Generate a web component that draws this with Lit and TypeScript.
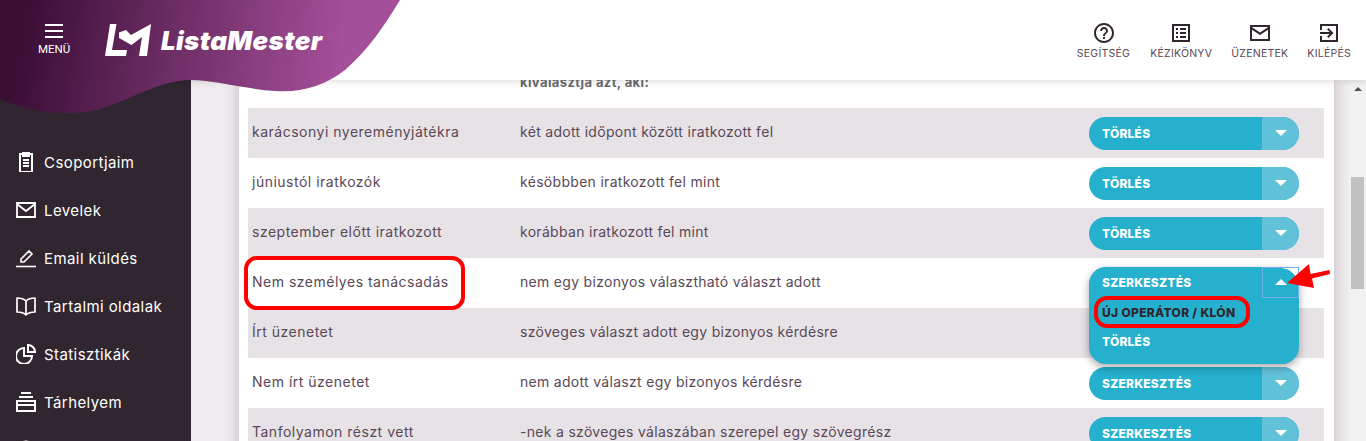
import { LitElement, html, css, svg } from "lit";
import { customElement } from "lit/decorators.js";

const nav = [
  { label: "Csoportjaim", icon: svg`<path fill="#fff" fill-rule="evenodd" d="M3 2h3V0h8v2h3v20H3V2zm2 2v16h10V4h-1v2H6V4H5zm2 4h6v2H7V8zm0 3h6v2H7v-2zm0 3h6v2H7v-2z" transform="translate(0,-1)"/>` },
  { label: "Levelek", icon: svg`<path fill="none" stroke="#fff" stroke-width="1.8" d="M1 3h18v14H1zM1 4l9 7 9-7"/><path stroke="#fff" stroke-width="2" d="M0 17h20"/>` },
  { label: "Email küldés", icon: svg`<path fill="none" stroke="#fff" stroke-width="1.6" d="M5 14v-3l8-8 3 3-8 8H5z"/><path stroke="#fff" stroke-width="1.6" d="M0 18.500h20"/>` },
  { label: "Tartalmi oldalak", icon: svg`<path fill="none" stroke="#fff" stroke-width="1.7" stroke-linejoin="round" d="M10 5C8 3 4 2 1 2v14c3 0 7 1 9 3 2-2 6-3 9-3V2c-3 0-7 1-9 3zm0 0v14"/>` },
  { label: "Statisztikák", icon: svg`<path fill="none" stroke="#fff" stroke-width="2" d="M8 4a8 8 0 1 0 8 8H8V4z"/><path fill="none" stroke="#fff" stroke-width="2" d="M12 1a7 7 0 0 1 7 7h-7V1z"/>` },
  { label: "Tárhelyem", icon: svg`<path fill="none" stroke="#fff" stroke-width="2" d="M1 9h18v10H1zM1 13h18"/><path stroke="#fff" stroke-width="2" d="M3 5h14M5 1h10"/>` },
  { label: "", icon: svg`<circle cx="10" cy="10" r="8.500" fill="none" stroke="#fff" stroke-width="2"/>` },
];

const rows: [string, string, string][] = [
  ["karácsonyi nyereményjátékra", "két adott időpont között iratkozott fel", "TÖRLÉS"],
  ["júniustól iratkozók", "késöbbben iratkozott fel mint", "TÖRLÉS"],
  ["szeptember előtt iratkozott", "korábban iratkozott fel mint", "TÖRLÉS"],
  ["Nem személyes tanácsadás", "nem egy bizonyos választható választ adott", "OPEN"],
  ["Írt üzenetet", "szöveges választ adott egy bizonyos kérdésre", ""],
  ["Nem írt üzenetet", "nem adott választ egy bizonyos kérdésre", "SZERKESZTÉS"],
  ["Tanfolyamon részt vett", "-nek a szöveges válaszában szerepel egy szövegrész", "SZERKESZTÉS"],
];

@customElement("app-root")
export class AppRoot extends LitElement {
  static styles = css`
    :host {
      display: grid;
      grid-template-columns: 191px 1fr;
      grid-template-rows: 80px 361px;
      height: 441px;
      overflow: hidden;
      position: relative;
      font-family: "Inter", "Liberation Sans", sans-serif;
      color: #5a4857;
    }
    header {
      grid-column: 1 / 3;
      position: relative;
      z-index: 3;
      background: #fff;
      box-shadow: 0 2px 7px rgba(0, 0, 0, 0.12);
      display: flex;
      justify-content: space-between;
      align-items: center;
    }
    .blob { position: absolute; left: 0; top: 0; z-index: 0; display: block; }
    .brand { position: relative; z-index: 1; display: flex; align-items: center; padding-left: 38px; }
    .menu { width: 32px; display: flex; flex-direction: column; align-items: center; color: #fff; font: 400 11.500px "Roboto", sans-serif; }
    .burger { width: 18px; height: 14px; margin-bottom: 4px; border-top: 2px solid #fff; border-bottom: 2px solid #fff; position: relative; box-sizing: border-box; display: flex; align-items: center; }
    .burger i { display: block; width: 100%; height: 2px; background: #fff; }
    .logo { margin-left: 35px; display: block; }
    .word { margin-left: 8px; color: #fff; font: italic 900 26px "Inter", sans-serif; letter-spacing: 0.35px; }
    .tools { position: relative; z-index: 1; display: flex; gap: 19px; padding-right: 15px; }
    .tool { display: flex; flex-direction: column; align-items: center; gap: 2px; font-size: 10.500px; letter-spacing: 0.25px; color: #5a4857; }
    .tool:first-child { margin-right: 1px; }
    .tool svg { display: block; }
    aside {
      background: #30262f;
      padding-top: 58px;
      display: flex;
      flex-direction: column;
      min-height: 0;
    }
    .nav { flex: none; height: 48px; display: flex; align-items: center; gap: 8px; padding-left: 16px; color: #fff; font-size: 15px; letter-spacing: 0.42px; }
    .nav svg { flex: none; display: block; }
    main { display: flex; background: #f0ecef; min-height: 0; }
    .area { flex: 1; padding-left: 48px; min-width: 0; }
    .card {
      width: 1095px;
      height: 400px;
      background: #fff;
      box-shadow: 0 0 14px rgba(60, 40, 60, 0.28);
      padding: 0 10px 0 9px;
      box-sizing: border-box;
    }
    .thead { height: 28px; padding-left: 272px; font-size: 13px; font-weight: 700; color: #6a6a6a; letter-spacing: 0.4px; display: flow-root; }
    .thead div { line-height: 20px; margin-top: -8px; }
    .row { height: 50px; display: grid; grid-template-columns: 272px 1fr 235px; align-items: center; font-size: 14px; letter-spacing: 0.3px; }
    .row:nth-child(even) { background: #e7e2e6; }
    .row .txt { padding-bottom: 4px; }
    .row .c1 { padding-left: 4px; letter-spacing: 0.5px; }
    .btn { width: 210px; height: 33px; border-radius: 17px; background: #25b0cd; display: flex; overflow: hidden; color: #fff; font-size: 12px; font-weight: 800; letter-spacing: 0.22px; position: relative; }
    .btn .t { flex: 1; display: flex; align-items: center; padding-left: 13px; }
    .btn .caret { width: 37px; background: #61c1d8; display: flex; align-items: center; justify-content: center; }
    .down { width: 0; height: 0; border: 6px solid transparent; border-top: 6px solid #fff; border-bottom: 0; }
    .up { width: 0; height: 0; border: 6px solid transparent; border-bottom: 6px solid #fff; border-top: 0; }
    .holder { position: relative; width: 210px; height: 33px; }
    .drop {
      position: absolute; left: 0; top: 0; width: 210px; height: 97px; z-index: 2;
      background: #25b0cd; border-radius: 17px; box-shadow: 0 3px 8px rgba(0, 0, 0, 0.35);
      color: #fff; font-size: 12px; font-weight: 800; letter-spacing: 0.22px;
    }
    .drop .item { height: 29.500px; display: flex; align-items: center; padding-left: 13px; }
    .drop .item:first-child { height: 31px; }
    .drop .dark { color: #30262f; letter-spacing: 0.32px; font-size: 12px; }
    .focus { position: absolute; right: 0; top: 0; width: 37px; height: 31px; box-sizing: border-box; border: 1px solid #6fb0ee; display: flex; align-items: center; justify-content: center; }
    .corner { position: absolute; right: 0; top: 0; width: 17px; height: 17px; background: radial-gradient(circle at 0 100%, transparent 16.500px, #fff 17px); }
    .scroll { width: 17px; background: #f1f1f1; display: flex; flex-direction: column; align-items: center; }
    .arrow { margin-top: 7px; width: 0; height: 0; border: 4px solid transparent; border-bottom: 4px solid #505050; border-top: 0; }
    .thumb { margin-top: 86px; width: 13px; height: 112px; background: #c1c1c1; }
    .mark { position: absolute; z-index: 4; box-sizing: border-box; border: 4px solid #fe0000; border-radius: 13px; }
    .m1 { left: 244px; top: 256px; width: 221px; height: 54px; }
    .m2 { left: 1094px; top: 296px; width: 156px; height: 32px; }
    .red-arrow { position: absolute; left: 1284px; top: 262px; z-index: 4; display: block; }
  `;

  private caret(label: string) {
    if (label === "OPEN") {
      return html`<div class="holder">
        <div class="drop">
          <div class="item">SZERKESZTÉS</div>
          <div class="item dark">ÚJ OPERÁTOR / KLÓN</div>
          <div class="item">TÖRLÉS</div>
          <div class="focus"><span class="corner"></span><span class="up"></span></div>
        </div>
      </div>`;
    }
    return html`<div class="btn">
      <div class="t">${label}</div>
      <div class="caret"><span class="down"></span></div>
    </div>`;
  }

  render() {
    return html`
      <header>
        <svg class="blob" width="400" height="116" viewBox="0 0 400 116">
          <defs>
            <linearGradient id="g" gradientUnits="userSpaceOnUse" x1="20" y1="30" x2="335" y2="85">
              <stop offset="0" stop-color="#3a0e35" />
              <stop offset="1" stop-color="#a44f99" />
            </linearGradient>
          </defs>
          <path fill="url(#g)" d="M0 0H400C385 25 368 50 345 70C325 86 300 93 275 91C245 89 215 80 190 80C160 80 130 100 100 109C70 117 30 113 0 99Z" />
        </svg>
        <div class="brand">
          <div class="menu"><div class="burger"><i></i></div>MENÜ</div>
          <svg class="logo" width="48" height="34" viewBox="0 0 48 34">
            <path fill="#fff" d="M5 1h6.500L7 27h15l-1 6H0zM14 9.500l7-2.500 5 5L46 1l-4 32h-8l3-19-10.500 8L14 15z" />
          </svg>
          <div class="word">ListaMester</div>
        </div>
        <div class="tools">
          <div class="tool">
            <svg width="24" height="24" viewBox="0 0 24 24" fill="#30262f"><path d="M11 18h2v-2h-2v2zm1-16C6.480 2 2 6.480 2 12s4.480 10 10 10 10-4.480 10-10S17.520 2 12 2zm0 18c-4.410 0-8-3.590-8-8s3.590-8 8-8 8 3.590 8 8-3.590 8-8 8zm0-14c-2.210 0-4 1.790-4 4h2c0-1.100.9-2 2-2s2 .9 2 2c0 2-3 1.750-3 5h2c0-2.250 3-2.500 3-5 0-2.210-1.790-4-4-4z"/></svg>
            SEGÍTSÉG
          </div>
          <div class="tool">
            <svg width="24" height="24" viewBox="0 0 24 24" fill="#30262f"><path d="M19 5v14H5V5h14m2-2H3v18h18V3zM11 7h6v2h-6V7zm0 4h6v2h-6v-2zm0 4h6v2h-6zM7 7h2v2H7zm0 4h2v2H7zm0 4h2v2H7z"/></svg>
            KÉZIKÖNYV
          </div>
          <div class="tool">
            <svg width="24" height="24" viewBox="0 0 24 24" fill="#30262f"><path d="M2 4h20v16H2V4zm2 2v.300l8 5.200 8-5.200V6H4zm16 2.700l-8 5.200-8-5.200V18h16V8.700z"/></svg>
            ÜZENETEK
          </div>
          <div class="tool">
            <svg width="24" height="24" viewBox="0 0 24 24" fill="#30262f"><path d="M10.090 15.590L11.500 17l5-5-5-5-1.410 1.410L12.670 11H3v2h9.670l-2.580 2.590zM21 3H3v6h2V5h14v14H5v-4H3v6h18V3z"/></svg>
            KILÉPÉS
          </div>
        </div>
      </header>
      <aside>
        ${nav.map(
          (n) => html`<div class="nav"><svg width="20" height="20" viewBox="0 0 20 20">${n.icon}</svg>${n.label}</div>`
        )}
      </aside>
      <main>
        <div class="area">
          <div class="card">
            <div class="thead"><div>kiválasztja azt, aki:</div></div>
            ${rows.map(
              (r) => html`<div class="row">
                <div class="txt c1">${r[0]}</div>
                <div class="txt">${r[1]}</div>
                ${this.caret(r[2])}
              </div>`
            )}
          </div>
        </div>
        <div class="scroll"><span class="arrow"></span><span class="thumb"></span></div>
      </main>
      <div class="mark m1"></div>
      <div class="mark m2"></div>
      <svg class="red-arrow" width="46" height="28" viewBox="0 0 46 28">
        <path fill="#fe0000" d="M3 21L25 2l1.500 10 19-4 .5 4-18 4.500L30 26z" />
      </svg>
    `;
  }
}
